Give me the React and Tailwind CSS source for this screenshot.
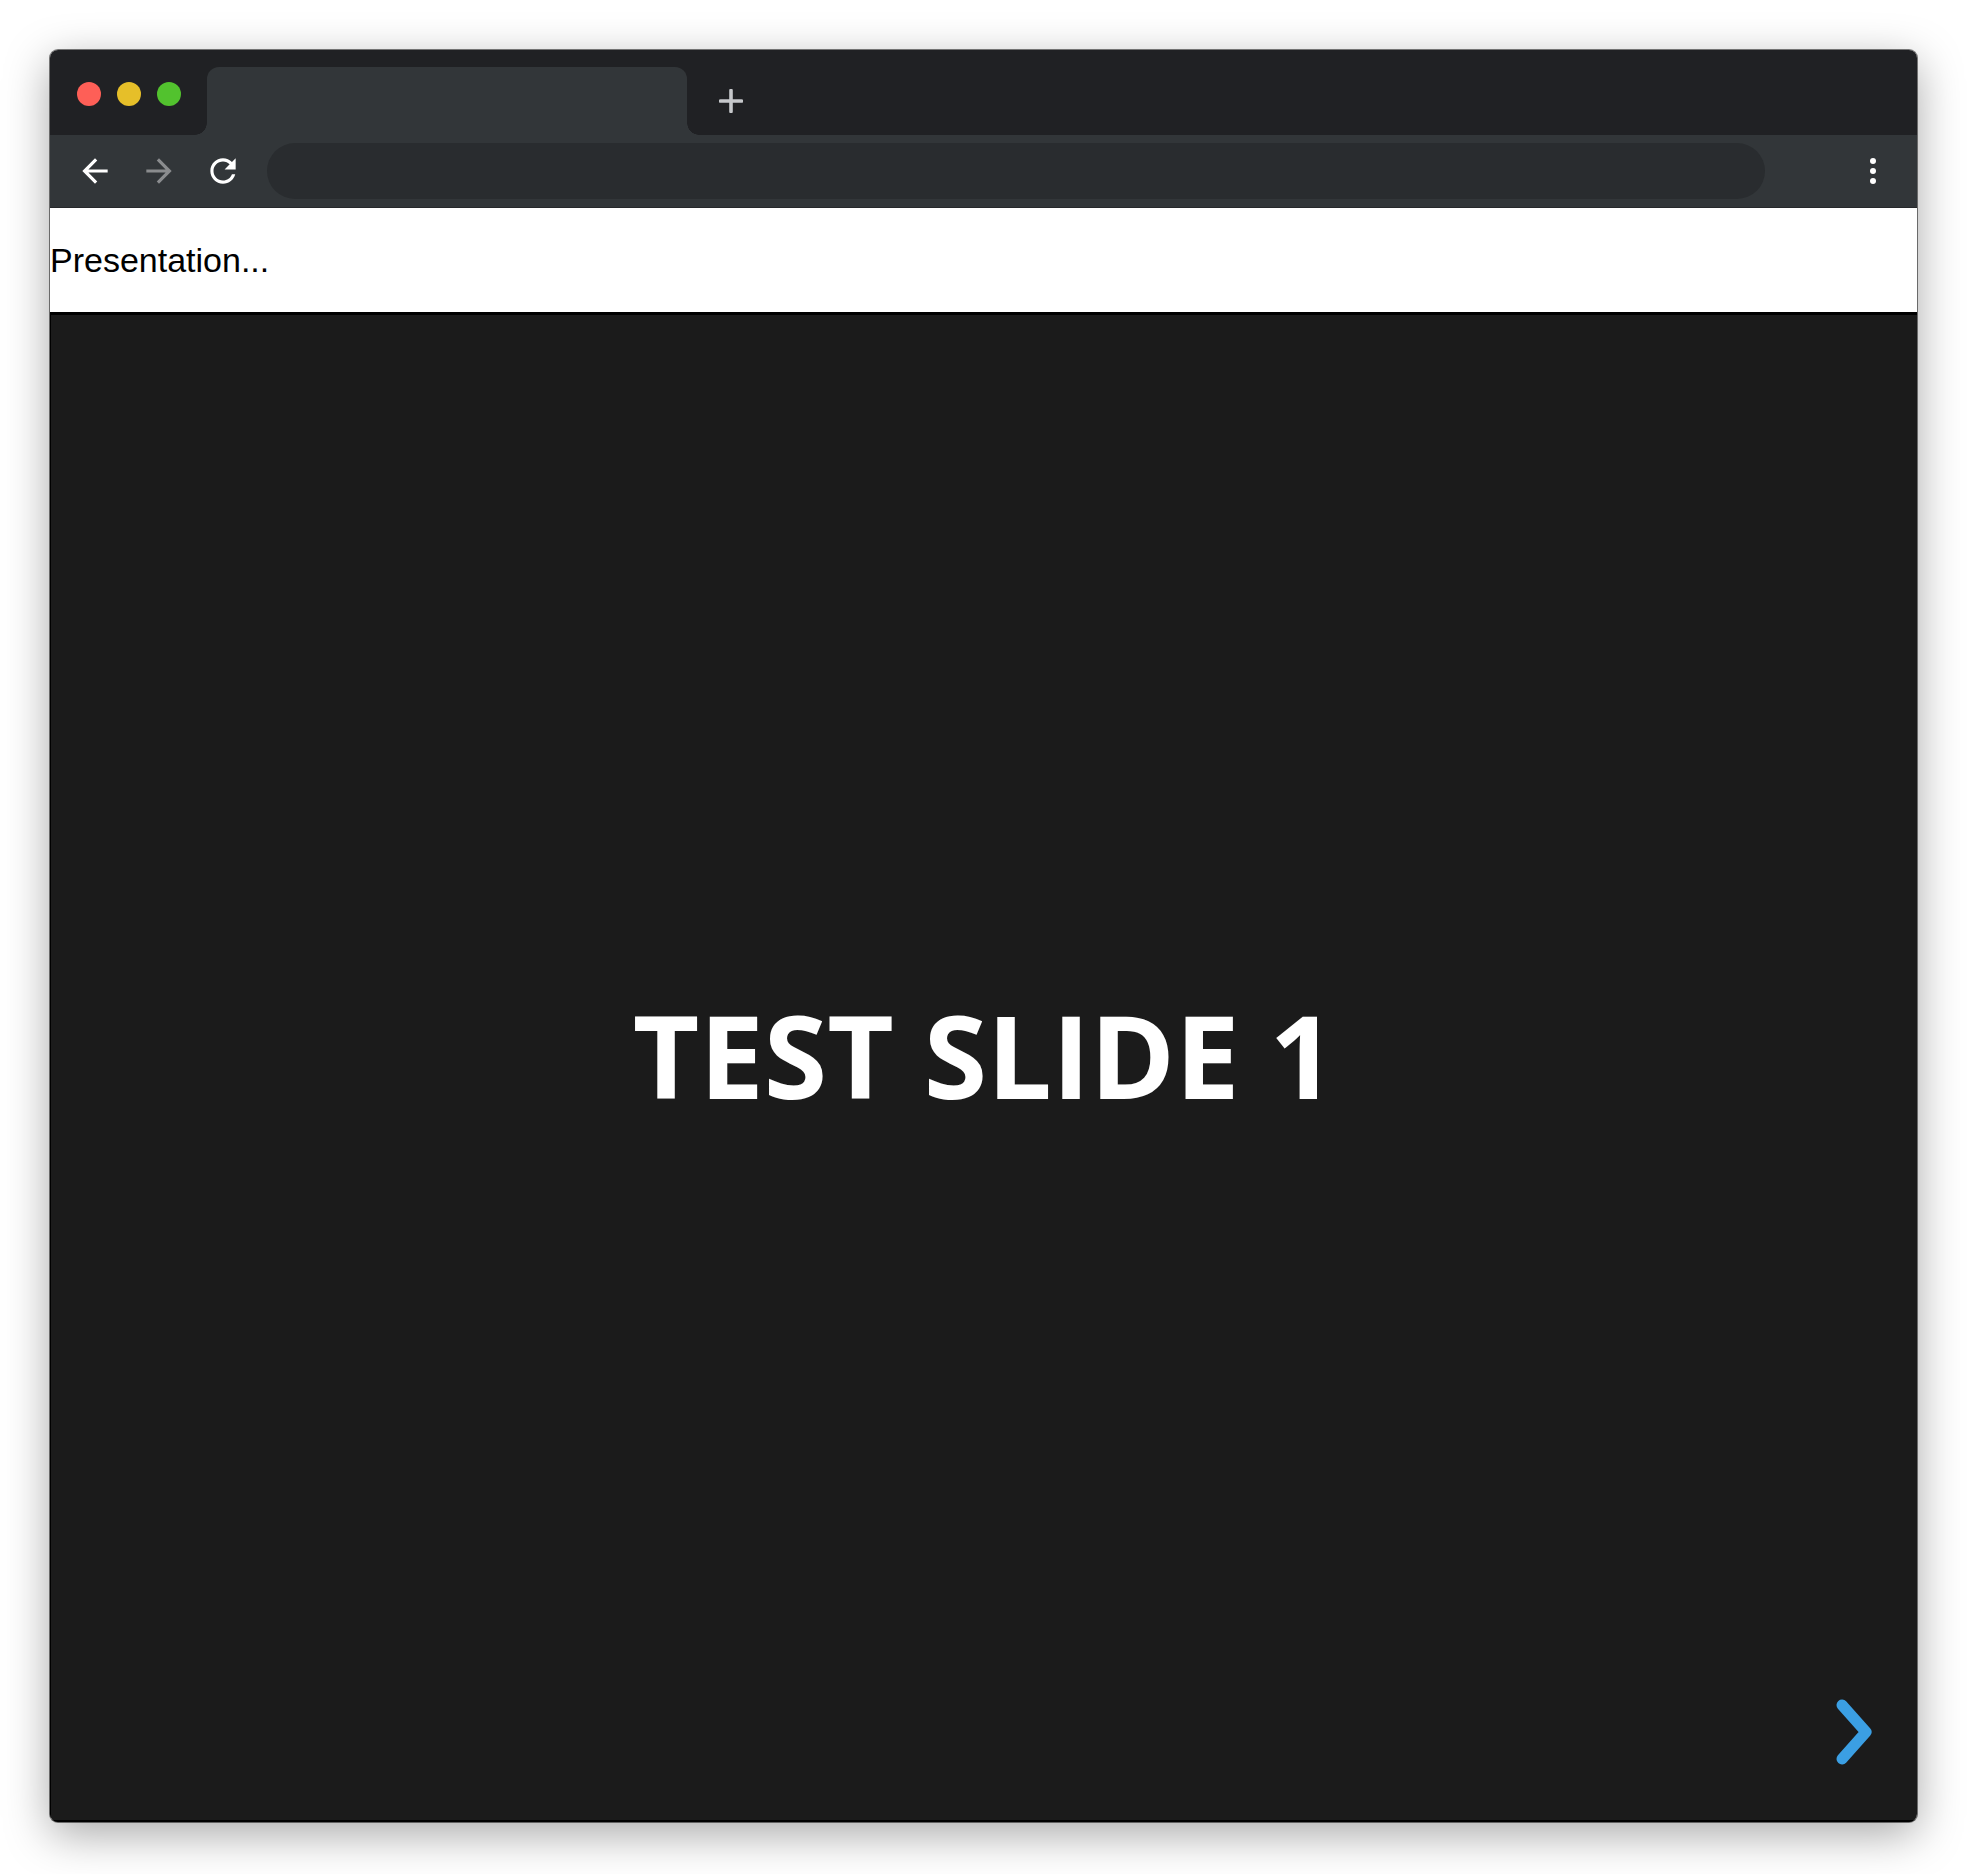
import React from 'react';

const BackIcon = ({ color }) => (
  <svg viewBox="0 0 24 24" className="w-[38px] h-[38px] shrink-0">
    <path fill={color} d="M20 11H7.83l5.59-5.59L12 4l-8 8 8 8 1.41-1.41L7.83 13H20v-2z" />
  </svg>
);

const ForwardIcon = ({ color }) => (
  <svg viewBox="0 0 24 24" className="w-[38px] h-[38px] shrink-0">
    <path fill={color} d="M12 4l-1.41 1.41L16.17 11H4v2h12.17l-5.58 5.59L12 20l8-8z" />
  </svg>
);

const ReloadIcon = () => (
  <svg viewBox="0 0 24 24" className="w-[38px] h-[38px] shrink-0">
    <path
      fill="#ffffff"
      d="M17.65 6.35C16.2 4.9 14.21 4 12 4c-4.42 0-7.99 3.58-7.99 8s3.57 8 7.99 8c3.73 0 6.84-2.55 7.73-6h-2.08c-.82 2.33-3.04 4-5.65 4-3.31 0-6-2.69-6-6s2.69-6 6-6c1.66 0 3.14.69 4.22 1.78L13 11h7V4l-2.35 2.35z"
    />
  </svg>
);

const App = () => {
  return (
    <div className="w-[1968px] h-[1874px] bg-white pl-[50px] pt-[50px]">
      <div className="w-[1867px] h-[1772px] rounded-lg overflow-hidden flex flex-col ring-1 ring-black/50 shadow-[0_12px_45px_rgba(0,0,0,0.35)]">
        {/* tab strip */}
        <div className="h-[85px] shrink-0 bg-[#202124] flex items-end">
          <div className="w-[145px] self-stretch flex items-start gap-[16px] pl-[27px] pt-[32px]">
            <span className="w-[24px] h-[24px] rounded-full bg-[#fe5f57]" />
            <span className="w-[24px] h-[24px] rounded-full bg-[#e6bf29]" />
            <span className="w-[24px] h-[24px] rounded-full bg-[#52c22e]" />
          </div>
          <div className="w-[12px] h-[12px] bg-[radial-gradient(circle_at_0_0,transparent_11.5px,#323639_12px)]" />
          <div className="w-[480px] h-[68px] rounded-t-[12px] bg-[#323639]" />
          <div className="w-[12px] h-[12px] bg-[radial-gradient(circle_at_100%_0,transparent_11.5px,#323639_12px)]" />
          <svg viewBox="0 0 24 24" className="w-[24px] h-[24px] self-start mt-[39px] ml-[20px]">
            <path d="M12 1.5v21M1.5 12h21" stroke="#c6c8cb" strokeWidth="3.6" strokeLinecap="round" />
          </svg>
        </div>

        {/* toolbar */}
        <div className="h-[73px] shrink-0 bg-[#323639] border-b border-[#26282b] flex items-center pl-[26px]">
          <div className="flex items-center gap-[26px]">
            <BackIcon color="#ffffff" />
            <ForwardIcon color="#8a8c8e" />
            <ReloadIcon />
          </div>
          <div className="ml-[25px] w-[1498px] h-[56px] rounded-full bg-[#292c2f]" />
          <div className="ml-auto mr-[41px] flex flex-col gap-[4px]">
            <span className="w-[6px] h-[6px] rounded-full bg-white" />
            <span className="w-[6px] h-[6px] rounded-full bg-white" />
            <span className="w-[6px] h-[6px] rounded-full bg-white" />
          </div>
        </div>

        {/* page */}
        <div className="h-[104px] shrink-0 bg-white flex items-center">
          <p className="font-['Liberation_Sans',Arial,sans-serif] text-[34px] text-black leading-none">Presentation...</p>
        </div>

        <div className="flex-1 relative bg-[#1b1b1b] border-t-[3px] border-l border-b-2 border-black flex items-center justify-center">
          <h1 className="font-['Open_Sans',sans-serif] font-bold text-[115px] leading-none text-white mb-[26px]">
            TEST SLIDE 1
          </h1>
          <svg viewBox="0 0 36 66" className="absolute right-[45px] bottom-[55px] w-[36px] h-[66px]">
            <path d="M6 6l24 27L6 60" fill="none" stroke="#3b9fe3" strokeWidth="11" strokeLinecap="round" strokeLinejoin="round" />
          </svg>
        </div>
      </div>
    </div>
  );
};

export default App;
